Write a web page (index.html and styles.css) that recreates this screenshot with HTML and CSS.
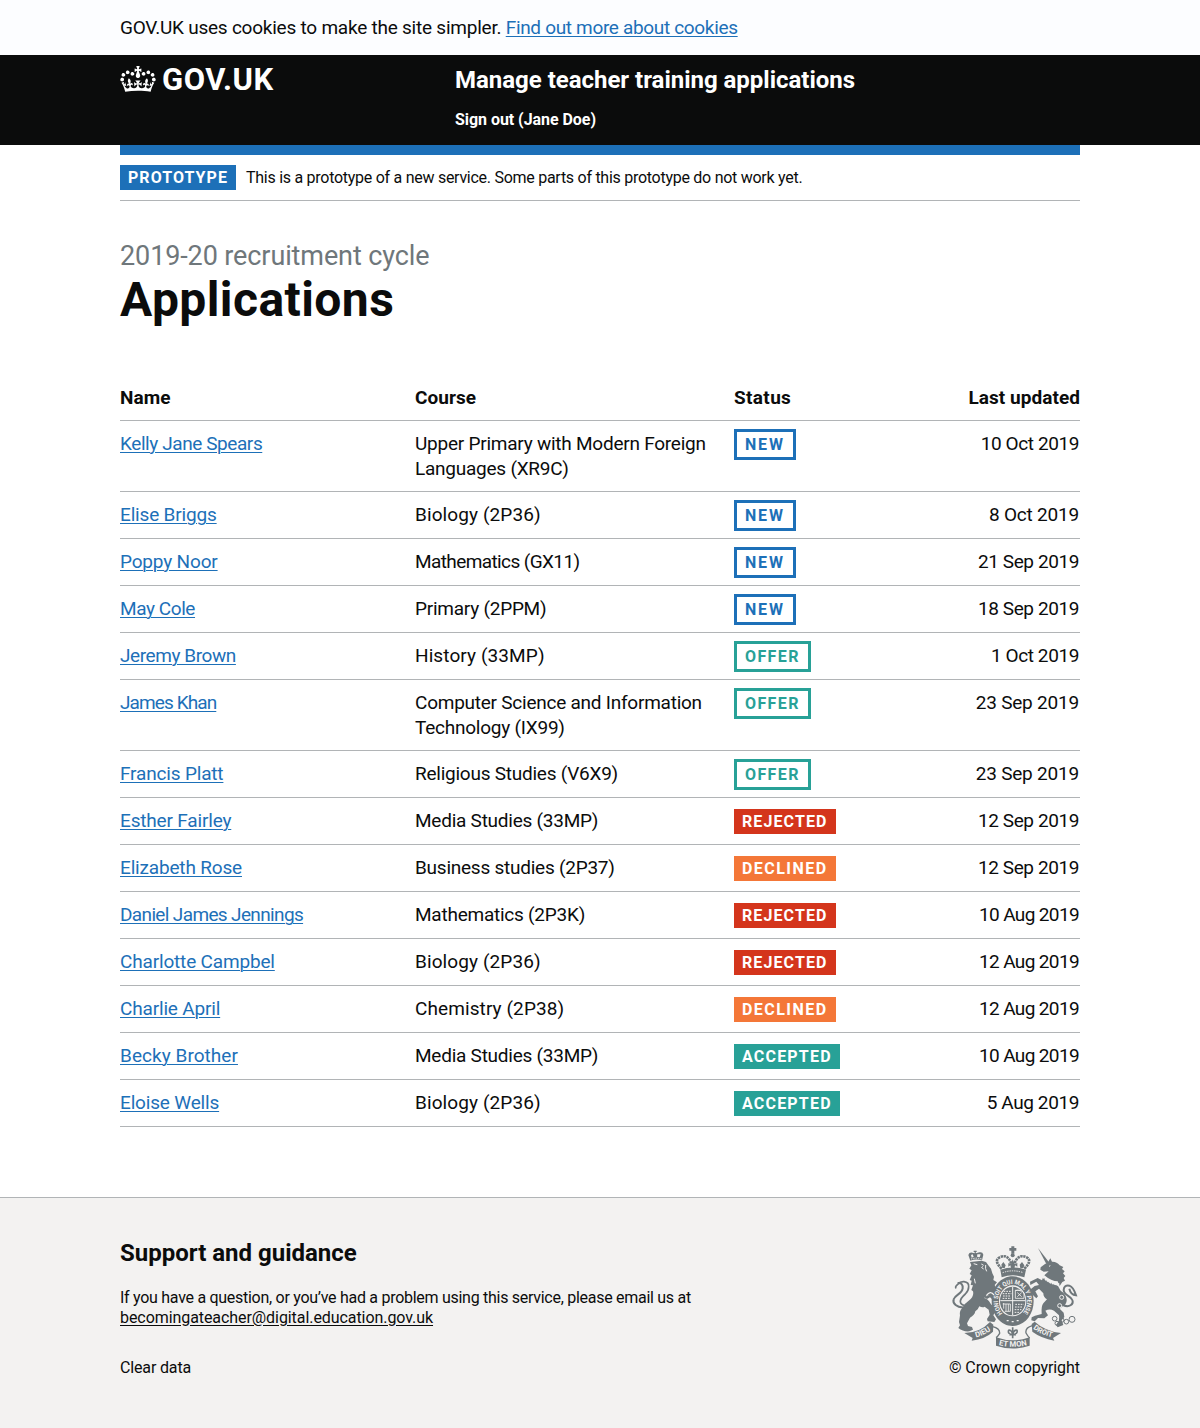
FILE: index.html
```html
<!DOCTYPE html>
<html lang="en">
<head>
<meta charset="utf-8">
<title>Applications - Manage teacher training applications</title>
<link rel="stylesheet" href="styles.css">
</head>
<body>
<div class="cookie-banner"><p class="container">GOV.UK uses cookies to make the site simpler. <a class="link cookie-link" href="#">Find out more about cookies</a></p></div>
<header class="header">
  <div class="container header-inner">
    <a class="logo" href="#">
      <svg class="crown" viewBox="0 0 132 97" width="36" height="26" aria-hidden="true"><path fill="currentColor" fill-rule="evenodd" d="M25 30.2c3.5 1.5 7.7-.2 9.1-3.7 1.5-3.6-.2-7.8-3.9-9.2-3.6-1.4-7.6.3-9.1 3.9-1.4 3.5.3 7.5 3.9 9zM9 39.5c3.6 1.5 7.8-.2 9.2-3.7 1.5-3.6-.2-7.8-3.9-9.1-3.6-1.5-7.6.2-9.1 3.8-1.4 3.5.3 7.5 3.8 9zM4.4 57.2c3.5 1.5 7.7-.2 9.1-3.8 1.5-3.6-.2-7.7-3.9-9.1-3.5-1.5-7.6.3-9.1 3.8-1.4 3.5.3 7.6 3.9 9.1zm38.3-21.4c3.5 1.5 7.7-.2 9.1-3.8 1.5-3.6-.2-7.7-3.9-9.1-3.6-1.5-7.6.3-9.1 3.8-1.3 3.6.4 7.7 3.9 9.1zm64.4-5.6c-3.6 1.5-7.8-.2-9.1-3.7-1.5-3.6.2-7.8 3.8-9.2 3.6-1.4 7.7.3 9.2 3.9 1.3 3.5-.4 7.5-3.9 9zm15.9 9.3c-3.6 1.5-7.7-.2-9.1-3.7-1.5-3.6.2-7.8 3.7-9.1 3.6-1.5 7.7.2 9.2 3.8 1.5 3.5-.3 7.5-3.8 9zm4.7 17.7c-3.6 1.5-7.8-.2-9.2-3.8-1.5-3.6.2-7.7 3.9-9.1 3.6-1.5 7.7.3 9.2 3.8 1.3 3.5-.4 7.6-3.9 9.1zM89.3 35.8c-3.6 1.5-7.8-.2-9.2-3.8-1.4-3.6.2-7.7 3.9-9.1 3.6-1.5 7.7.3 9.2 3.8 1.4 3.6-.3 7.7-3.9 9.1zM69.7 17.7l8.9 4.7V9.3l-8.9 2.8c-.2-.3-.5-.6-.9-.9L72.4 0H59.6l3.5 11.2c-.3.3-.6.5-.9.9l-8.8-2.8v13.1l8.8-4.7c.3.3.6.7.9.9l-5 15.4v.1c-.2.8-.4 1.6-.4 2.4 0 4.1 3.1 7.5 7 8.1h.2c.3 0 .7.1 1 .1.4 0 .7 0 1-.1h.2c4-.6 7.1-4.1 7.1-8.1 0-.8-.1-1.7-.4-2.4V34l-5.1-15.4c.4-.2.7-.6 1-.9zM66 92.8c16.9 0 32.8 1.1 47.1 3.2 4-16.9 8.9-26.7 14-33.5l-9.6-3.4c1 4.9 1.1 7.2 0 10.2-1.5-1.4-3-4.3-4.2-8.7L108.6 76c2.8-2 5-3.2 7.5-3.3-4.4 9.4-10 11.9-13.6 11.2-4.3-.8-6.3-4.6-5.6-7.9 1-4.7 5.7-5.9 8-.5 4.3-8.7-3-11.4-7.6-8.8 7.1-7.2 7.9-13.5 2.1-21.1-8 6.1-8.1 12.3-4.5 20.8-4.7-5.4-12.1-2.5-9.5 6.2 3.4-5.2 7.9-2 7.2 3.1-.6 4.3-6.4 7.8-13.5 7.2-10.3-.9-10.9-8-11.2-13.8 2.5-.5 7.1 1.8 11 7.3L80.2 60c-4.1 4.4-8 5.3-12.3 5.4 1.4-4.4 8-11.6 8-11.6H55.5s6.4 7.2 7.9 11.6c-4.2-.1-8-1-12.3-5.4l1.4 16.4c3.9-5.5 8.5-7.7 10.9-7.3-.3 5.8-.9 12.8-11.1 13.8-7.2.6-12.9-2.9-13.5-7.2-.7-5 3.8-8.3 7.1-3.1 2.7-8.7-4.6-11.6-9.4-6.2 3.7-8.5 3.6-14.7-4.6-20.8-5.8 7.6-5 13.9 2.2 21.1-4.7-2.6-11.9.1-7.7 8.8 2.3-5.5 7.1-4.2 8.1.5.7 3.3-1.3 7.1-5.7 7.9-3.5.7-9-1.8-13.5-11.2 2.5.1 4.7 1.3 7.5 3.3l-4.7-15.4c-1.2 4.4-2.7 7.2-4.3 8.7-1.1-3-.9-5.3 0-10.2l-9.5 3.4c5 6.9 9.9 16.7 14 33.5 14.8-2.1 30.8-3.2 47.7-3.2z"/></svg>
      <span class="logo-text">GOV.UK</span>
    </a>
    <div class="header-content">
      <a class="service-name" href="#">Manage teacher training applications</a>
      <a class="sign-out" href="#">Sign out (Jane Doe)</a>
    </div>
  </div>
</header>
<div class="container">
  <div class="phase-banner"><strong class="tag phase-tag">PROTOTYPE</strong><span class="phase-text">This is a prototype of a new service. Some parts of this prototype do not work yet.</span></div>
  <main class="main">
    <span class="caption">2019-20 recruitment cycle</span>
    <h1 class="title">Applications</h1>
    <table class="table">
      <thead><tr><th class="col-name">Name</th><th class="col-course">Course</th><th class="col-status">Status</th><th class="date">Last updated</th></tr></thead>
      <tbody>
        <tr><td><a class="link tight" href="#">Kelly Jane Spears</a></td><td class="course">Upper Primary with Modern Foreign Languages (XR9C)</td><td><strong class="tag new">NEW</strong></td><td class="date">10 Oct 2019</td></tr>
        <tr><td><a class="link" href="#">Elise Briggs</a></td><td class="course loose">Biology (2P36)</td><td><strong class="tag new">NEW</strong></td><td class="date loose">8 Oct 2019</td></tr>
        <tr><td><a class="link" href="#">Poppy Noor</a></td><td class="course tighter">Mathematics (GX11)</td><td><strong class="tag new">NEW</strong></td><td class="date">21 Sep 2019</td></tr>
        <tr><td><a class="link tight" href="#">May Cole</a></td><td class="course">Primary (2PPM)</td><td><strong class="tag new">NEW</strong></td><td class="date">18 Sep 2019</td></tr>
        <tr><td><a class="link tight" href="#">Jeremy Brown</a></td><td class="course loose">History (33MP)</td><td><strong class="tag offer">OFFER</strong></td><td class="date">1 Oct 2019</td></tr>
        <tr><td><a class="link tightest" href="#">James Khan</a></td><td class="course">Computer Science and Information Technology (IX99)</td><td><strong class="tag offer">OFFER</strong></td><td class="date loose">23 Sep 2019</td></tr>
        <tr><td><a class="link" href="#">Francis Platt</a></td><td class="course">Religious Studies (V6X9)</td><td><strong class="tag offer">OFFER</strong></td><td class="date loose">23 Sep 2019</td></tr>
        <tr><td><a class="link" href="#">Esther Fairley</a></td><td class="course">Media Studies (33MP)</td><td><strong class="tag rejected">REJECTED</strong></td><td class="date">12 Sep 2019</td></tr>
        <tr><td><a class="link" href="#">Elizabeth Rose</a></td><td class="course">Business studies (2P37)</td><td><strong class="tag declined">DECLINED</strong></td><td class="date">12 Sep 2019</td></tr>
        <tr><td><a class="link tighter" href="#">Daniel James Jennings</a></td><td class="course">Mathematics (2P3K)</td><td><strong class="tag rejected">REJECTED</strong></td><td class="date tighter">10 Aug 2019</td></tr>
        <tr><td><a class="link" href="#">Charlotte Campbel</a></td><td class="course loose">Biology (2P36)</td><td><strong class="tag rejected">REJECTED</strong></td><td class="date tighter">12 Aug 2019</td></tr>
        <tr><td><a class="link" href="#">Charlie April</a></td><td class="course loose">Chemistry (2P38)</td><td><strong class="tag declined">DECLINED</strong></td><td class="date tighter">12 Aug 2019</td></tr>
        <tr><td><a class="link loose" href="#">Becky Brother</a></td><td class="course">Media Studies (33MP)</td><td><strong class="tag accepted">ACCEPTED</strong></td><td class="date tighter">10 Aug 2019</td></tr>
        <tr><td><a class="link" href="#">Eloise Wells</a></td><td class="course loose">Biology (2P36)</td><td><strong class="tag accepted">ACCEPTED</strong></td><td class="date">5 Aug 2019</td></tr>
      </tbody>
    </table>
  </main>
</div>
<footer class="footer">
  <div class="container footer-inner">
    <div>
      <h2 class="footer-title">Support and guidance</h2>
      <p class="footer-text">If you have a question, or you’ve had a problem using this service, please email us at<br><a class="email" href="#">becomingateacher@digital.education.gov.uk</a></p>
      <a class="clear" href="#">Clear data</a>
    </div>
    <div class="crest">
      <svg class="arms" viewBox="27 24 393 315" width="131" height="105" aria-hidden="true">
        <defs>
          <path id="garter" d="M188 232A44 51 0 1 1 248 232"/>
          <path id="motto-left" d="M108 304Q134 298 158 279"/>
          <path id="motto-mid" d="M176 327Q218 338 262 327"/>
          <path id="motto-right" d="M279 277Q304 297 338 304"/>
        </defs>
        <g fill="currentColor">
          <!-- lion -->
          <path d="M90 78L94 88L88 98L95 103L89 114L95 118L89 132L95 134L92 147L99 148L94 162L99 166Q103 182 86 194Q74 202 70 212Q57 224 60 238L57 258L60 268L55 276Q70 288 88 286L99 281L96 273L84 270L81 262L90 245Q104 238 106 226L113 220L118 211Q128 216 134 212L146 221L149 236L141 249L143 256L163 258L168 250L160 238L164 230L160 212L152 203Q144 188 132 186L147 176L164 190L170 183L158 170L170 158L164 147L171 139L160 132L162 122L157 112L153 98L145 88L138 78L125 74Z"/>
          <path d="M133 184L154 173L165 185L159 192L150 184L141 189Z"/>
          <path fill-rule="evenodd" d="M91 74L85 57Q88 48 97 50L104 52L104 48H101V44H110V48H107L108 52L118 49Q128 47 130 56L126 73Q108 67 91 74ZM93 57L95 65L101 62L98 55ZM112 55L111 62L119 64L122 55Z"/>
          <!-- unicorn -->
          <path d="M294 36L327 79L319 84Z"/>
          <path d="M323 80L331 67L336 77Q350 76 359 88L370 93L366 99L374 106L369 112L376 120L371 126L375 134L367 138L359 150L353 136Q334 136 313 118L326 106L311 107L301 101L302 94L315 84Z"/>
          <path d="M310 122L318 133L354 150L362 164Q378 174 380 190Q382 204 368 211L359 218L371 230L373 243L365 253L370 267L353 274L348 267L358 252L357 238L342 224Q329 217 316 224L324 238L313 247L294 246L284 256L274 253L275 244L285 239L305 234Q303 211 310 202L321 190Q310 184 310 172L297 158L286 166L294 181L289 187L276 175L272 160L284 150L297 147L289 137L271 147L270 137L293 126L306 133Z"/>
          <!-- royal crown -->
          <path d="M214 31H223V36H229V44H223V53H214V44H208V36H214Z"/>
          <circle cx="218" cy="58" r="6"/>
          <path d="M181 101Q219 88 258 101L253 124Q219 112 185 124Z"/>
          <path d="M214 100L211 88L205 92V81L213 84L218 70L224 84L232 81V92L225 88L223 100Z"/>
          <path d="M187 96L184 86L190 78L197 88L194 96ZM241 96L239 86L246 78L253 88L250 96Z"/>
          <!-- garter and shield -->
          <path fill-rule="evenodd" d="M218 121C253 121 281 153 281 195S253 270 218 270S155 237 155 195S183 121 218 121ZM218 148C195 148 177 169 177 196S195 241 218 241S259 222 259 196S241 148 218 148Z"/>
          <ellipse cx="218" cy="195" rx="38" ry="43"/>
          <!-- ribbons -->
          <path d="M73 291Q119 291 150 258L160 266L159 287Q136 309 95 314L98 306Z"/>
          <path d="M363 291Q316 286 284 257L275 264L277 287Q304 307 343 314L339 306Z"/>
          <path d="M168 304Q218 322 269 304V329Q218 346 168 329Z"/>
        </g>
        <g fill="none" stroke="currentColor">
          <path stroke-width="6" d="M73 214C50 216 37 202 41 190C45 176 66 174 68 157C69 146 64 139 53 141"/>
          <path stroke-width="5" d="M49 157Q43 154 53 145Q61 136 72 137Q87 139 86 152Q86 164 76 174Q61 187 61 197Q62 207 74 208"/>
          <path stroke-width="6" d="M369 207C387 216 402 205 397 192C393 179 371 178 371 162Q372 146 388 149Q400 153 408 178Q392 176 388 158"/>
          <path stroke-width="8" stroke-dasharray="7 2" d="M185 98Q160 74 179 64Q204 52 214 84M253 98Q278 74 260 64Q234 52 223 84"/>
          <path stroke-width="4" d="M158 272Q180 277 179 292Q173 302 168 305M277 269Q255 275 258 291Q264 302 269 306"/>
          <g stroke-width="3"><circle cx="344" cy="248" r="7"/><circle cx="351" cy="262" r="6"/><circle cx="365" cy="252" r="7"/><circle cx="379" cy="257" r="7"/><circle cx="396" cy="250" r="9"/></g>
          <path stroke-width="5" d="M218 274V307M208 296H228M218 296Q202 294 206 283Q213 280 218 294Q223 280 231 283Q234 294 218 296"/>
        </g>
        <g class="light" fill="none">
          <path stroke-width="3" d="M218 153V237M181 194H256"/>
          <path stroke-width="3" stroke-dasharray="5 3" d="M191 166H213M188 173H214M189 180H213M188 187H213M226 205H251M225 213H248M224 221H244M224 229H238"/>
          <path stroke-width="2.5" d="M226 163H241V166M226 163V187H252V171Q242 160 226 163M232 170L245 182M245 170L232 182"/>
          <path stroke-width="2.5" d="M188 204H211V226H194M191 201V218M198 204V226M205 204V226"/>
          <path stroke-width="3" d="M101 83L112 86M124 84L131 88M128 91L125 95L131 99M137 87Q135 99 140 106M103 128L106 142M327 91L331 89"/>
          <path stroke-width="4" d="M139 179Q151 162 162 177"/>
          <path stroke-width="7" stroke-dasharray="6 2" d="M310 122Q329 145 360 145"/>
          <path stroke-width="3" stroke-dasharray="4 3" d="M188 110Q218 99 250 110M93 69Q108 64 125 69"/>
          <g stroke-width="3"><circle cx="365" cy="184" r="6"/><circle cx="359" cy="209" r="6"/></g>
          <path stroke-width="4" d="M200 254H206M215 257H221M230 254H236"/>
        </g>
        <g class="motto">
          <text font-size="19"><textPath href="#garter" textLength="228" lengthAdjust="spacingAndGlyphs">HONI SOIT QUI MAL Y PENSE</textPath></text>
          <text font-size="23"><textPath href="#motto-left">DIEU</textPath></text>
          <text font-size="23"><textPath href="#motto-mid" textLength="86">ET MON</textPath></text>
          <text font-size="22"><textPath href="#motto-right">DROIT</textPath></text>
        </g>
      </svg>
      <span class="copyright">© Crown copyright</span>
    </div>
  </div>
</footer>
</body>
</html>
```
FILE: styles.css
```css
* { box-sizing: border-box; }
body {
  margin: 0;
  color: #0b0c0c;
  background: #fff;
  font: 400 19px/25px Roboto, "Liberation Sans", sans-serif;
  letter-spacing: -0.23px;
}
h1, h2, p { margin: 0; }
a { color: inherit; text-decoration: none; }
.container { width: 960px; margin: 0 auto; }
.link { color: #1d70b8; text-decoration: underline; text-decoration-thickness: 1px; text-underline-offset: 2px; }

.cookie-banner { height: 55px; padding: 15px 0; background: #fcfdff; }
.cookie-link { letter-spacing: -0.33px; }

.header { height: 90px; background: #0b0c0c; color: #fff; }
.header-inner { display: flex; height: 100px; padding-top: 10px; border-bottom: 10px solid #1d70b8; }
.logo { display: flex; width: 335px; gap: 6px; }
.crown { margin-top: 1px; }
.logo-text { font-weight: 700; font-size: 31px; line-height: 30px; letter-spacing: 0.6px; }
.header-content { display: flex; flex-direction: column; }
.service-name { font-weight: 700; font-size: 24px; line-height: 30px; letter-spacing: -0.02px; }
.sign-out { margin-top: 15px; font-weight: 700; font-size: 16px; line-height: 20px; letter-spacing: -0.05px; }

.phase-banner { display: flex; height: 56px; padding: 20px 0 10px; border-bottom: 1px solid #b1b4b6; }
.phase-text { margin-left: 10px; font-size: 16px; line-height: 26px; letter-spacing: -0.27px; }

.tag {
  display: block;
  width: max-content;
  height: 25px;
  padding: 0 8px;
  color: #fff;
  font-weight: 700;
  font-size: 16px;
  line-height: 25px;
  letter-spacing: 1.1px;
}
.phase-tag { background: #1d70b8; letter-spacing: 1.05px; }

.main { padding: 40px 0; }
.caption { display: block; color: #6f777b; font-size: 27px; line-height: 30px; letter-spacing: -0.11px; }
.title { margin: 4px 0 50px; font-size: 48px; line-height: 50px; letter-spacing: 0.42px; }

.table { width: 100%; margin-bottom: 30px; table-layout: fixed; border-spacing: 0; }
.table th, .table td { padding: 10px 20px 10px 0; border-bottom: 1px solid #b1b4b6; text-align: left; vertical-align: top; }
.table th { height: 46px; font-weight: 700; letter-spacing: 0.05px; }
.table td { height: 47px; }
.table .col-name { width: 295px; }
.table .col-course { width: 319px; }
.table .col-status { letter-spacing: 0.35px; }
.table .date { padding-right: 0; text-align: right; }
.table td.date { padding-right: 1px; letter-spacing: -0.4px; }
.table .link { letter-spacing: -0.17px; }
.table .link.loose { letter-spacing: 0.05px; }
.table .link.tight { letter-spacing: -0.42px; }
.table .link.tighter { letter-spacing: -0.64px; }
.table .link.tightest { letter-spacing: -0.9px; }
.table .course { letter-spacing: -0.24px; }
.table .course.loose { letter-spacing: 0.1px; }
.table .course.tighter { letter-spacing: -0.6px; }
.table td.date.loose { letter-spacing: -0.2px; }
.table td.date.tighter { letter-spacing: -0.63px; }
.table .tag { margin-top: 1px; }
.table .new, .table .offer { height: 31px; margin: -2px 0 -4px; border: 3px solid; }
.new { color: #1d70b8; letter-spacing: 1.8px; }
.offer { color: #28a197; letter-spacing: 1.4px; }
.rejected { background: #d4351c; }
.declined { background: #f47738; letter-spacing: 1.45px; }
.accepted { background: #28a197; letter-spacing: 1.2px; }

.footer { height: 231px; padding-top: 40px; border-top: 1px solid #b1b4b6; background: #f3f2f1; font-size: 16px; line-height: 20px; }
.footer-inner { display: flex; justify-content: space-between; }
.footer-title { margin-bottom: 20px; font-size: 24px; line-height: 30px; letter-spacing: 0; }
.footer-text { margin-bottom: 30px; letter-spacing: -0.28px; }
.email { text-decoration: underline; text-underline-offset: 2px; letter-spacing: -0.07px; }
.clear { letter-spacing: -0.15px; }
.crest { display: flex; width: 131px; flex-direction: column; gap: 9px; padding-top: 6px; color: #6f777b; }
.arms { display: block; }
.light { stroke: #f3f2f1; }
.motto { fill: #f3f2f1; font-weight: 700; letter-spacing: 0; }
.copyright { color: #0b0c0c; letter-spacing: -0.1px; white-space: nowrap; }
```
